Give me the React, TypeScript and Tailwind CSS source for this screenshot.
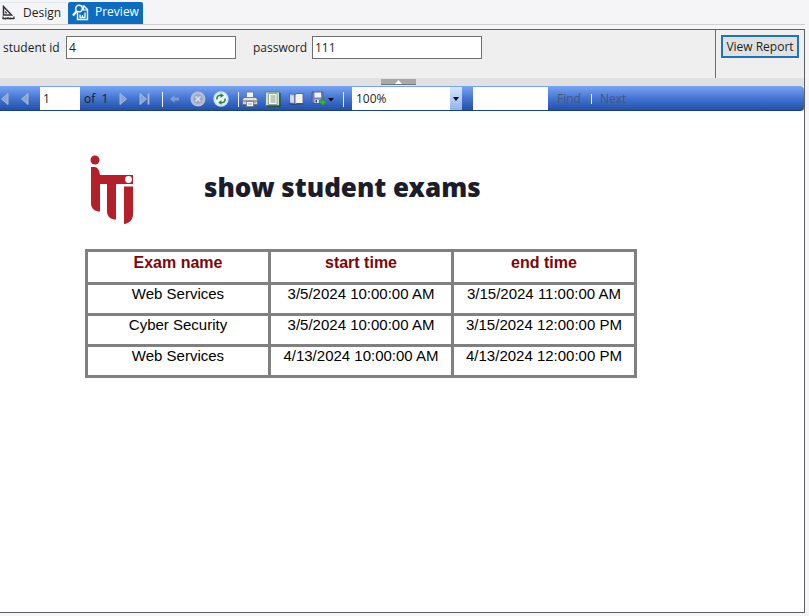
import { useState } from "react";
import type { ReactNode } from "react";

const exams = [
  ["Web Services", "3/5/2024 10:00:00 AM", "3/15/2024 11:00:00 AM"],
  ["Cyber Security", "3/5/2024 10:00:00 AM", "3/15/2024 12:00:00 PM"],
  ["Web Services", "4/13/2024 10:00:00 AM", "4/13/2024 12:00:00 PM"],
];

function DesignIcon() {
  return (
    <svg width="14" height="16" viewBox="0 0 14 16" fill="none" stroke="#333" aria-hidden="true">
      <path d="M2.500 1.500v8.500h8z" strokeWidth="1.500" />
      <path d="M4.500 6.500v1.500H6z" strokeWidth="0.8" />
      <path d="M1.500 13.500h12M2 11.500v2.500M4.500 12.500v2M7 12v2M9.500 12.500v2M13 11.500v2.500" strokeWidth="1.300" />
    </svg>
  );
}

function PreviewIcon() {
  return (
    <svg width="17" height="17" viewBox="0 0 17 17" fill="none" stroke="#fff" aria-hidden="true">
      <path d="M5.500 8.500v7h10V5.500L12 2h-1.500" strokeWidth="1.400" />
      <circle cx="7" cy="4.500" r="3.300" fill="#0e6cc0" strokeWidth="1.400" />
      <path d="M4.800 7L1 11.500" strokeWidth="2.200" />
      <path d="M11.500 2.500V6h4" strokeWidth="1.200" />
      <path d="M8 13.500v-3M10.500 13.500V11M13 13.500V8.500M7.500 13.500h6" strokeWidth="1.300" />
    </svg>
  );
}

function Arrow({ flip = false, bar = false }: { flip?: boolean; bar?: boolean }) {
  return (
    <svg width="12" height="14" viewBox="0 0 12 14" className={flip ? "shrink-0 -scale-x-100" : "shrink-0"} aria-hidden="true">
      <path d="M2 1.500v11L8.500 7z" fill="#8aa5d4" stroke="#a9b7d2" />
      {bar && <path d="M10.500 1.500v11" stroke="#a9b7d2" strokeWidth="1.800" />}
    </svg>
  );
}

function BackIcon() {
  return (
    <svg width="10" height="10" viewBox="0 0 10 10" aria-hidden="true">
      <path d="M0 5l4.500-4v2.500H9v3H4.500V9z" fill="#7f9acb" />
    </svg>
  );
}

function StopIcon() {
  return (
    <svg width="16" height="16" viewBox="0 0 16 16" aria-hidden="true">
      <circle cx="8" cy="8" r="7.500" fill="#b4bfd4" />
      <circle cx="8" cy="8" r="4.800" fill="#9aa8c4" />
      <path d="M5.500 5.500l5 5M10.500 5.500l-5 5" stroke="#dde1e9" strokeWidth="1.600" />
    </svg>
  );
}

function RefreshIcon() {
  return (
    <svg width="16" height="16" viewBox="0 0 16 16" aria-hidden="true">
      <circle cx="8" cy="8" r="7.700" fill="#c9e2f5" />
      <circle cx="8" cy="8" r="6" fill="#f1f9f6" />
      <path d="M4 8.500C3.500 5.500 5.500 4 8 4.300M12 7.500c.5 3-1.500 4.500-4 4.200" fill="none" stroke="#2c8a47" strokeWidth="1.700" />
      <path d="M7.500 2l3.500 2.500L7.500 7zM8.500 9L5 11.500 8.500 14z" fill="#2c8a47" />
    </svg>
  );
}

function PrintIcon() {
  return (
    <svg width="16" height="16" viewBox="0 0 16 16" aria-hidden="true">
      <path d="M4.500 1h7v6h-7z" fill="#eef2fa" stroke="#6b7280" strokeWidth=".8" />
      <path d="M2 6.500h12l1.500 2v5H.500v-5z" fill="#d3d3cd" stroke="#686d74" strokeWidth=".8" />
      <path d="M1 10h14" stroke="#6e7175" strokeWidth="1.200" />
      <path d="M2 8h12" stroke="#f4f4ef" />
      <path d="M4.500 10.500h7v5h-7z" fill="#f4f7ff" stroke="#68717d" strokeWidth=".8" />
      <path d="M6 13h4" stroke="#87a7d4" />
      <path d="M12 11.500h2" stroke="#d6a444" />
    </svg>
  );
}

function LayoutIcon() {
  return (
    <svg width="16" height="16" viewBox="0 0 16 16" aria-hidden="true">
      <path d="M.500 1h14v13.500H.500z" fill="#c9e3c8" stroke="#4d8a68" />
      <path d="M15 2v13.300H2" fill="none" stroke="#26513c" strokeWidth="1.300" />
      <path d="M3.500 2.500h8.500v11H3.500z" fill="#fffff5" stroke="#7d9682" strokeWidth=".8" />
      <path d="M5.500 5h5M5.500 7h5M5.500 9h5M5.500 11h5" stroke="#6e857a" strokeWidth=".9" />
    </svg>
  );
}

function PageSetupIcon() {
  return (
    <svg width="16" height="14" viewBox="0 0 16 14" aria-hidden="true">
      <path d="M1.500 1.500L7 2.500v9.500L1.500 11z" fill="#b4c4e6" stroke="#4b5f92" strokeWidth=".8" />
      <path d="M7 2.500l2-1h6v10H9l-2 .5z" fill="#f4f2ea" stroke="#55647e" strokeWidth=".9" />
      <path d="M3 4v5.500M4.800 4.300v5.500" stroke="#e7edf8" />
      <path d="M1 11.800l6 1 2-.800h6.500" fill="none" stroke="#34435f" />
    </svg>
  );
}

function ExportIcon() {
  return (
    <svg width="24" height="16" viewBox="0 0 24 16" aria-hidden="true">
      <path d="M1 1h11v11H2.500L1 10.500z" fill="#7a80ba" stroke="#474f8c" strokeWidth=".8" />
      <path d="M3.500 1.500h6.500v5H3.500z" fill="#f1f3fb" />
      <path d="M3.500 8.500h5V12h-5z" fill="#dfe4f0" />
      <path d="M4.500 9H6v2.500H4.500z" fill="#38457c" />
      <path d="M8 9.500h3V7.500l4.500 3.800-4.500 3.800V13c-2 0-3-1-3-3.500z" fill="#3dac48" stroke="#267e37" strokeWidth=".6" />
      <path d="M17 7h6l-3 3.500z" fill="#111" />
    </svg>
  );
}

function ToolButton({ label, width, children }: { label: string; width: string; children: ReactNode }) {
  return (
    <button type="button" aria-label={label} className={`flex h-[23px] shrink-0 items-center justify-center ${width}`}>
      {children}
    </button>
  );
}

function Divider() {
  return <span className="mt-[5px] h-[15px] w-px shrink-0 bg-[#edf2fc]" />;
}

function Logo() {
  return (
    <svg width="48" height="72" viewBox="0 0 48 72" role="img" aria-label="ITI" className="shrink-0">
      <g fill="#b51f29">
        <circle cx="6" cy="6" r="4.500" />
        <path d="M2 13h3.500C9 13.500 10.500 16.500 11 21h33v9H27v35.500C22 65.500 18.500 63 18 58V30h-7v27.500C6 57.500 2.500 55 2 50z" />
        <path d="M35 32.500h9V61c-.5 5-4 8.500-9 9z" />
      </g>
      <circle cx="39.500" cy="25.500" r="3.400" fill="#fff" />
    </svg>
  );
}

export default function App() {
  const [studentId, setStudentId] = useState("4");
  const [password, setPassword] = useState("111");
  const [page, setPage] = useState("1");
  const [query, setQuery] = useState("");

  return (
    <div className="flex h-screen flex-col bg-[#f5f5f7] pr-1 pb-[3px] font-['Open_Sans',sans-serif] text-xs text-[#1e1e1e]">
      <nav className="flex h-[25px] shrink-0 items-end border-b border-[#cfcfd4]">
        <button type="button" className="flex h-[22px] w-[68px] items-center gap-2 border-t border-[#e0e6ee] pb-[2px] pl-px">
          <DesignIcon />
          Design
        </button>
        <button type="button" className="flex h-[22px] w-[75px] items-center gap-[6px] rounded-t-xs bg-[#0e6cc0] pb-[2px] pl-1 text-white">
          <PreviewIcon />
          Preview
        </button>
      </nav>

      <div className="mt-1 flex min-h-0 flex-1 flex-col border-t border-r border-b border-[#5f6064]">
        <form className="flex h-12 shrink-0 bg-[#efefef]" onSubmit={(e) => e.preventDefault()}>
          <div className="flex flex-1 items-start pt-[6px] pl-[3px]">
            <label htmlFor="student-id" className="w-[63px] leading-6">student id</label>
            <input
              id="student-id"
              value={studentId}
              onChange={(e) => setStudentId(e.target.value)}
              className="h-[23px] w-[170px] border border-[#6e6e6e] bg-white px-[2px]"
            />
            <label htmlFor="password" className="ml-[17px] w-[59px] leading-6">password</label>
            <input
              id="password"
              value={password}
              onChange={(e) => setPassword(e.target.value)}
              className="h-[23px] w-[170px] border border-[#6e6e6e] bg-white px-[2px]"
            />
          </div>
          <div className="w-[89px] border-l border-[#6e6e6e] pt-[5px] pl-[5px]">
            <button type="submit" className="h-[23px] w-[78px] border-2 border-[#1b76b8] bg-[#e1e1e1] leading-4 whitespace-nowrap">
              View Report
            </button>
          </div>
        </form>

        <div className="flex h-2 shrink-0 justify-center bg-[#e1e1e1] pr-2">
          <button type="button" aria-label="Collapse parameters" className="mt-px flex h-[6px] w-[35px] items-center justify-center border-b border-[#777] bg-[#a9a9a9]">
            <svg width="7" height="4" viewBox="0 0 7 4" aria-hidden="true">
              <path d="M0 4l3.500-4L7 4z" fill="#fff" />
            </svg>
          </button>
        </div>

        <div className="flex h-[25px] shrink-0 items-start overflow-hidden rounded-r-sm border-b border-[#173f91] bg-linear-to-b from-[#78a5f5] via-[#4676d3] to-[#2050a9] pt-px">
          <ToolButton label="First page" width="w-2"><Arrow flip /></ToolButton>
          <ToolButton label="Previous page" width="w-8"><Arrow flip /></ToolButton>
          <input
            aria-label="Page"
            value={page}
            onChange={(e) => setPage(e.target.value)}
            className="h-[23px] w-10 shrink-0 bg-white px-[3px]"
          />
          <span className="w-[36px] shrink-0 pl-1 leading-[23px] whitespace-pre">of  1</span>
          <ToolButton label="Next page" width="w-4"><Arrow /></ToolButton>
          <ToolButton label="Last page" width="w-[24px]"><Arrow bar /></ToolButton>
          <span className="w-[6px] shrink-0" />
          <Divider />
          <ToolButton label="Back" width="w-6"><BackIcon /></ToolButton>
          <ToolButton label="Stop" width="w-[22px]"><StopIcon /></ToolButton>
          <ToolButton label="Refresh" width="w-6"><RefreshIcon /></ToolButton>
          <span className="w-[5px] shrink-0" />
          <Divider />
          <ToolButton label="Print" width="w-[22px]"><PrintIcon /></ToolButton>
          <ToolButton label="Print layout" width="w-6"><LayoutIcon /></ToolButton>
          <ToolButton label="Page setup" width="w-[22px]"><PageSetupIcon /></ToolButton>
          <ToolButton label="Export" width="w-8"><ExportIcon /></ToolButton>
          <span className="w-1 shrink-0" />
          <Divider />
          <div className="ml-2 grid h-[23px] w-[110px] shrink-0 bg-white">
            <select aria-label="Zoom" className="col-start-1 row-start-1 appearance-none bg-white pl-1">
              <option>100%</option>
            </select>
            <span className="pointer-events-none col-start-1 row-start-1 flex w-3 items-center justify-center justify-self-end bg-linear-to-b from-[#d6e5fc] to-[#91b4ef]">
              <svg width="6" height="4" viewBox="0 0 6 4" aria-hidden="true">
                <path d="M0 0h6L3 4z" fill="#111" />
              </svg>
            </span>
          </div>
          <input
            aria-label="Search text"
            value={query}
            onChange={(e) => setQuery(e.target.value)}
            className="ml-[11px] h-[23px] w-[75px] shrink-0 bg-white px-1"
          />
          <button type="button" className="ml-[9px] w-[34px] text-left leading-[23px] text-[#46557a]">Find</button>
          <span className="mt-[7px] h-[10px] w-px bg-[#edf2fc]" />
          <button type="button" className="ml-2 leading-[23px] text-[#46557a]">Next</button>
        </div>

        <main className="min-h-0 flex-1 overflow-hidden bg-white pt-[43px] pl-[85px]">
          <header className="flex h-[95px] items-start gap-[67px] pl-1">
            <Logo />
            <h1 className="pt-4 font-['Noto_Sans',sans-serif] text-[26px] leading-[34px] font-black text-[#1b1c2c]">show student exams</h1>
          </header>
          <table className="w-[552px] table-fixed border-collapse text-center font-['Liberation_Sans',Arial,sans-serif] text-[15px] leading-[18px] text-black">
            <thead>
              <tr className="h-[33px] text-base leading-[22px] text-[#7d0508]">
                {["Exam name", "start time", "end time"].map((h) => (
                  <th key={h} scope="col" className="border-3 border-[#808080] p-0 align-top font-bold">{h}</th>
                ))}
              </tr>
            </thead>
            <tbody>
              {exams.map((row, i) => (
                <tr key={i} className="h-[31px]">
                  {row.map((cell, j) => (
                    <td key={j} className="border-3 border-[#808080] p-0 align-top">{cell}</td>
                  ))}
                </tr>
              ))}
            </tbody>
          </table>
        </main>
      </div>
    </div>
  );
}
